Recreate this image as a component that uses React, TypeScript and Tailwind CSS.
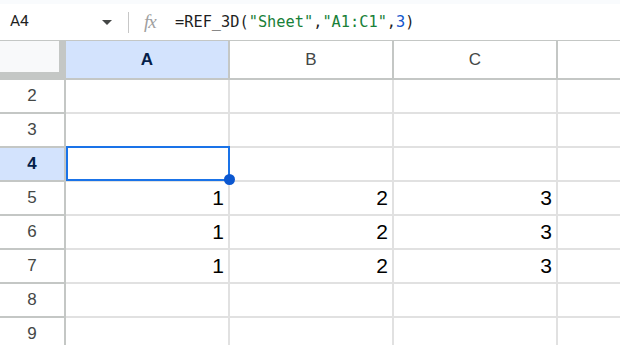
import React from "react";

const cols = ["A", "B", "C"];
const rows: { n: number; vals: string[] }[] = [
  { n: 2, vals: ["", "", ""] },
  { n: 3, vals: ["", "", ""] },
  { n: 4, vals: ["", "", ""] },
  { n: 5, vals: ["1", "2", "3"] },
  { n: 6, vals: ["1", "2", "3"] },
  { n: 7, vals: ["1", "2", "3"] },
  { n: 8, vals: ["", "", ""] },
  { n: 9, vals: ["", "", ""] },
];

const headFont = { fontFamily: '"Liberation Sans", Arial, sans-serif' };
const monoFont = { fontFamily: '"DejaVu Sans Mono", "Liberation Mono", monospace' };

function FormulaBar() {
  return (
    <div className="flex h-[36px] items-center bg-white">
      <div className="flex w-[128px] items-center pl-[10px] pr-[16px]">
        <span className="flex-1 text-[15.5px] text-[#1f1f1f]" style={{ fontFamily: "Roboto, sans-serif" }}>
          A4
        </span>
        <svg width="10" height="5" viewBox="0 0 10 5">
          <path d="M0 0h10L5 5z" fill="#444746" />
        </svg>
      </div>
      <div className="h-[21px] w-px bg-[#c7c7c7]" />
      <span
        className="ml-[15px] w-[31px] text-[19px] italic text-[#a0a0a0]"
        style={{ fontFamily: '"Liberation Serif", serif', letterSpacing: "-1px" }}
      >
        fx
      </span>
      <span className="text-[15.3px] text-[#1f1f1f]" style={monoFont}>
        =REF_3D(
        <span className="text-[#188038]">"Sheet"</span>,
        <span className="text-[#188038]">"A1:C1"</span>,
        <span className="text-[#1155cc]">3</span>)
      </span>
    </div>
  );
}

export default function App() {
  return (
    <div className="h-[345px] w-[620px] overflow-hidden bg-white">
      <div className="h-[4px] bg-[#f9fbfd]" />
      <FormulaBar />

      {/* column headers */}
      <div className="flex h-[40px] border-t border-[#c4c7c5]" style={headFont}>
        <div className="w-[66px] shrink-0 bg-[#c4c7c5] pb-[8px] pr-[7px]">
          <div className="h-full bg-[#f8f9fa]" />
        </div>
        {cols.map((c) => (
          <div
            key={c}
            className={`flex w-[164px] shrink-0 items-center justify-center border-b-2 border-r-2 border-[#c4c7c5] text-[17px] ${
              c === "A" ? "bg-[#d3e3fd] font-bold text-[#041e49]" : "bg-white text-[#444746]"
            }`}
          >
            {c}
          </div>
        ))}
        <div className="flex-1 border-b-2 border-[#c4c7c5] bg-white" />
      </div>

      {/* body rows */}
      {rows.map((r) => (
        <div key={r.n} className="flex h-[34px]">
          <div
            className={`flex w-[66px] shrink-0 items-center justify-center border-b-2 border-r-2 border-[#c4c7c5] text-[17px] ${
              r.n === 4 ? "bg-[#d3e3fd] font-bold text-[#041e49]" : "bg-white text-[#444746]"
            }`}
            style={headFont}
          >
            {r.n}
          </div>
          {r.vals.map((v, i) => (
            <div
              key={i}
              className="relative flex w-[164px] shrink-0 items-end justify-end border-b-2 border-r-2 border-[#e1e1e1] pb-[4px] pr-[4px] text-[21px] leading-[24px] text-black"
              style={headFont}
            >
              {v}
              {r.n === 4 && i === 0 && (
                <div className="absolute -top-[2px] -bottom-[1px] left-0 -right-[2px] z-10 border-2 border-[#1a73e8]">
                  <div className="absolute -bottom-[6px] -right-[7px] h-[11px] w-[11px] rounded-full bg-[#0b57d0]" />
                </div>
              )}
            </div>
          ))}
          <div className="flex-1 border-b-2 border-[#e1e1e1]" />
        </div>
      ))}
    </div>
  );
}
